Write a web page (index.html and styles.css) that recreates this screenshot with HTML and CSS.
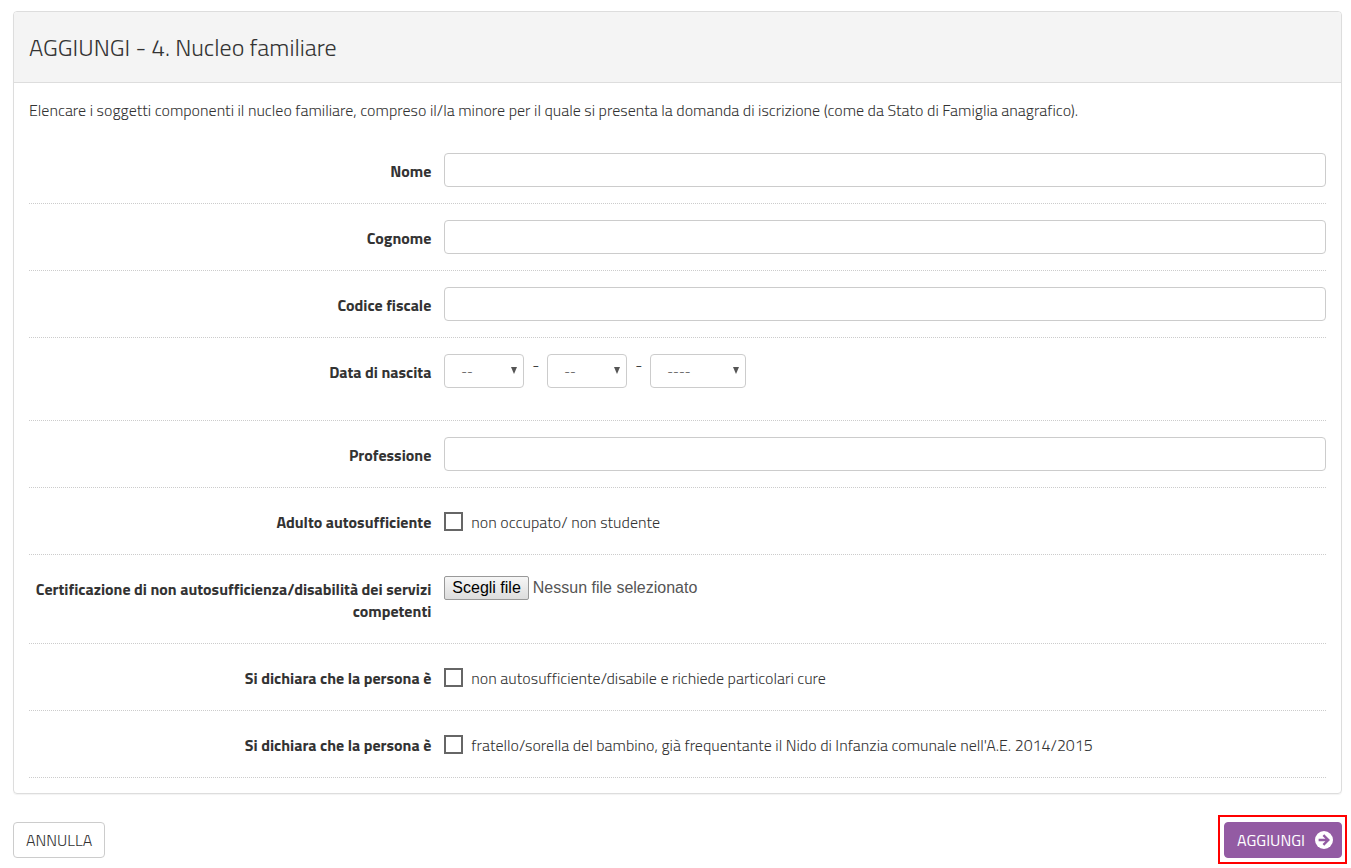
FILE: index.html
```
<!DOCTYPE html>
<html lang="it">
<head>
<meta charset="utf-8">
<meta name="viewport" content="width=device-width, initial-scale=1">
<title>Nucleo familiare</title>
<link rel="stylesheet" href="styles.css">
</head>
<body>
<form class="page">
  <section class="panel">
    <header class="panel-heading"><h1 class="panel-title">AGGIUNGI - 4. Nucleo familiare</h1></header>
    <div class="panel-body">
      <p class="intro">Elencare i soggetti componenti il nucleo familiare, compreso il/la minore per il quale si presenta la domanda di iscrizione (come da Stato di Famiglia anagrafico).</p>
      <div class="row">
        <label class="row-label" for="nome">Nome</label>
        <input class="control" type="text" id="nome">
      </div>
      <div class="row">
        <label class="row-label" for="cognome">Cognome</label>
        <input class="control" type="text" id="cognome">
      </div>
      <div class="row">
        <label class="row-label" for="cf">Codice fiscale</label>
        <input class="control" type="text" id="cf">
      </div>
      <div class="row row-date">
        <label class="row-label" for="giorno">Data di nascita</label>
        <div class="date">
          <span class="picker"><select class="control" id="giorno"><option>--</option></select><svg class="arrow" viewBox="0 0 6 7" aria-hidden="true"><path d="M0 0h6L3 7z"/></svg></span>
          <span class="dash">-</span>
          <span class="picker"><select class="control" aria-label="Mese"><option>--</option></select><svg class="arrow" viewBox="0 0 6 7" aria-hidden="true"><path d="M0 0h6L3 7z"/></svg></span>
          <span class="dash">-</span>
          <span class="picker picker-year"><select class="control" aria-label="Anno"><option>----</option></select><svg class="arrow" viewBox="0 0 6 7" aria-hidden="true"><path d="M0 0h6L3 7z"/></svg></span>
        </div>
      </div>
      <div class="row">
        <label class="row-label" for="professione">Professione</label>
        <input class="control" type="text" id="professione">
      </div>
      <div class="row">
        <span class="row-label">Adulto autosufficiente</span>
        <label class="check"><input class="box" type="checkbox">non occupato/ non studente</label>
      </div>
      <div class="row">
        <label class="row-label" for="certificazione">Certificazione di non autosufficienza/disabilità dei servizi competenti</label>
        <label class="file"><input class="file-input" type="file" id="certificazione"><span class="file-button">Scegli file</span><span>Nessun file selezionato</span></label>
      </div>
      <div class="row">
        <span class="row-label">Si dichiara che la persona è</span>
        <label class="check"><input class="box" type="checkbox">non autosufficiente/disabile e richiede particolari cure</label>
      </div>
      <div class="row">
        <span class="row-label">Si dichiara che la persona è</span>
        <label class="check"><input class="box" type="checkbox">fratello/sorella del bambino, già frequentante il Nido di Infanzia comunale nell'A.E. 2014/2015</label>
      </div>
    </div>
  </section>
  <div class="actions">
    <button class="btn" type="button">ANNULLA</button>
    <button class="btn btn-primary" type="submit">AGGIUNGI
      <svg class="btn-icon" viewBox="0 0 18 18" aria-hidden="true"><circle cx="9" cy="9" r="9" fill="#fff"/><path d="M3.6 9h9M8.4 4.1L13.3 9l-4.9 4.9" fill="none" stroke="#935ba3" stroke-width="2.4"/></svg>
    </button>
  </div>
</form>
</body>
</html>
```
FILE: styles.css
```
* { box-sizing: border-box; }
body {
  margin: 0;
  background: #fff;
  color: #333;
  font: 300 16px/22px "Titillium Web", Roboto, sans-serif;
}
.page { padding: 11px 9px 10px 13px; }
.panel {
  border: 1px solid #ddd;
  border-radius: 4px;
  box-shadow: 0 1px 1px rgba(0, 0, 0, .05);
}
.panel-heading {
  padding: 20px 15px;
  background: #f4f4f4;
  border-bottom: 1px solid #ddd;
  border-radius: 3px 3px 0 0;
}
.panel-title { margin: 0; font-size: 24px; font-weight: 300; line-height: 30px; }
.panel-body { padding: 16px 15px 15px; }
.intro { margin: 0 0 16px; }
.row {
  display: flex;
  align-items: flex-start;
  gap: 13px;
  padding: 16px 0;
  border-bottom: 1px dotted #ccc;
}
.row-date { padding-bottom: 32px; }
.row-label {
  flex: 0 0 calc(100% / 3 - 30px);
  padding: 7px 0 5px;
  text-align: right;
  font-weight: 700;
}
.control {
  flex: 1;
  min-width: 0;
  height: 34px;
  padding: 6px 12px;
  border: 1px solid #ccc;
  border-radius: 4px;
  background: #fff;
  color: #555;
  font: inherit;
}
.date { display: flex; }
.picker { position: relative; width: 80px; }
.picker-year { width: 96px; }
.picker .control { width: 100%; padding: 5px 16px 7px; appearance: none; font-size: 13px; }
.arrow {
  position: absolute;
  top: 13px;
  right: 7px;
  width: 6px;
  height: 7px;
  fill: #555;
  pointer-events: none;
}
.dash { width: 23px; text-align: center; }
.check { display: flex; gap: 8px; padding-top: 8px; line-height: 20px; }
.box {
  flex: none;
  appearance: none;
  width: 19px;
  height: 19px;
  margin: 0;
  border: 2px solid #666;
  background: #fff;
}
.file {
  display: flex;
  align-items: center;
  gap: 4px;
  padding-top: 5px;
  color: #555;
  font: 400 16px/22px "Liberation Sans", Arial, sans-serif;
}
.file-input { position: absolute; width: 1px; height: 1px; opacity: 0; }
.file-button {
  padding: 0 7px;
  border: 1px solid #999;
  border-radius: 2px;
  background: linear-gradient(#f6f6f6, #ddd);
  color: #000;
}
.actions { display: flex; justify-content: space-between; padding-top: 28px; }
.btn {
  display: flex;
  align-items: center;
  gap: 10px;
  height: 36px;
  padding: 0 12px;
  border: 1px solid #ccc;
  border-radius: 4px;
  background: #fff;
  color: #333;
  font: inherit;
}
.btn-primary {
  position: relative;
  padding: 0 8px 0 12px;
  border-color: #935ba3;
  background: #935ba3;
  color: #fff;
  font-weight: 400;
}
.btn-primary::after {
  content: "";
  position: absolute;
  inset: -8px -6px -7px -7px;
  border: 2px solid #f00;
}
.btn-icon { width: 18px; height: 18px; }
```
